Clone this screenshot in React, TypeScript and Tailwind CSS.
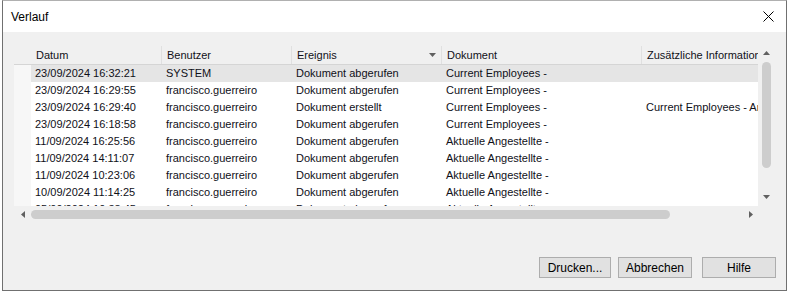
import React from "react";

const rows = [
  ["23/09/2024 16:32:21", "SYSTEM", "Dokument abgerufen", "Current Employees -", ""],
  ["23/09/2024 16:29:55", "francisco.guerreiro", "Dokument abgerufen", "Current Employees -", ""],
  ["23/09/2024 16:29:40", "francisco.guerreiro", "Dokument erstellt", "Current Employees -", "Current Employees - Anmerkungen"],
  ["23/09/2024 16:18:58", "francisco.guerreiro", "Dokument abgerufen", "Current Employees -", ""],
  ["11/09/2024 16:25:56", "francisco.guerreiro", "Dokument abgerufen", "Aktuelle Angestellte -", ""],
  ["11/09/2024 14:11:07", "francisco.guerreiro", "Dokument abgerufen", "Aktuelle Angestellte -", ""],
  ["11/09/2024 10:23:06", "francisco.guerreiro", "Dokument abgerufen", "Aktuelle Angestellte -", ""],
  ["10/09/2024 11:14:25", "francisco.guerreiro", "Dokument abgerufen", "Aktuelle Angestellte -", ""],
  ["05/09/2024 10:38:45", "francisco.guerreiro", "Dokument abgerufen", "Aktuelle Angestellte -", ""],
];

const widths = ["w-[130px]", "w-[130px]", "w-[150px]", "w-[200px]", "w-[160px]"];
const headers = ["Datum", "Benutzer", "Ereignis", "Dokument", "Zusätzliche Informationen"];

function Tri({ dir }: { dir: "up" | "down" | "left" | "right" }) {
  const pts =
    dir === "up" ? "0,4 3.5,0 7,4" : dir === "down" ? "0,0 7,0 3.5,4" : dir === "left" ? "4,0 4,7 0,3.5" : "0,0 0,7 4,3.5";
  const w = dir === "up" || dir === "down" ? 7 : 4;
  const h = dir === "up" || dir === "down" ? 4 : 7;
  return (
    <svg width={w} height={h} viewBox={`0 0 ${w} ${h}`}>
      <polygon points={pts} fill="#606060" />
    </svg>
  );
}

export default function App() {
  return (
    <div className="w-[790px] h-[293px] bg-white pl-[2px]" style={{ fontFamily: '"Liberation Sans", Arial, sans-serif' }}>
      <div className="w-[785px] h-[291px] border border-[#707070] border-t-[#b0b0b0] flex flex-col">
        {/* title bar */}
        <div className="h-[31px] bg-white flex items-center justify-between pl-[8px] pr-[12px] shrink-0">
          <span className="text-[12px] text-black">Verlauf</span>
          <svg width="11" height="11" viewBox="0 0 11 11">
            <path d="M0.5 0.5 L10.5 10.5 M10.5 0.5 L0.5 10.5" stroke="#000" strokeWidth="1" />
          </svg>
        </div>
        {/* body */}
        <div className="flex-1 bg-[#f0f0f0] flex flex-col pt-[13px] pl-[11px] pr-[10px]">
          {/* list */}
          <div className="w-[762px] h-[178px] flex flex-col text-[11px] text-[#101018]">
            <div className="flex h-[161px]">
              {/* data area */}
              <div className="w-[744px] overflow-hidden flex flex-col">
                {/* header */}
                <div className="flex h-[20px] border-b border-[#d5d5d5] shrink-0 bg-[#f0f0f0] pt-[1px]">
                  <div className="w-[17px] shrink-0" />
                  {headers.map((h, i) => (
                    <div
                      key={h}
                      className={`${widths[i]} shrink-0 flex items-center justify-between pl-[5px] pr-[5px] whitespace-nowrap overflow-hidden ${i > 0 ? "border-l border-[#e0e0e0]" : ""}`}
                    >
                      <span>{h}</span>
                      {i === 2 && <Tri dir="down" />}
                    </div>
                  ))}
                </div>
                {/* rows */}
                <div className="flex-1 overflow-hidden flex">
                  <div className="w-[17px] shrink-0 bg-[#f7f7f7]" />
                  <div className="flex-1 bg-white overflow-hidden">
                    {rows.map((r, ri) => (
                      <div key={ri} className={`flex h-[17px] leading-[17px] ${ri === 0 ? "bg-[#e5e5e5]" : ""}`}>
                        {r.map((c, ci) => (
                          <div
                            key={ci}
                            className={`${widths[ci]} shrink-0 ${ci === 0 ? "pl-[4px]" : "pl-[5px]"} whitespace-nowrap overflow-hidden`}
                          >
                            {c}
                          </div>
                        ))}
                      </div>
                    ))}
                  </div>
                </div>
              </div>
              {/* vertical scrollbar */}
              <div className="w-[17px] bg-[#f0f0f0] flex flex-col items-center">
                <div className="h-[14px] flex items-center justify-center pt-[2px]">
                  <Tri dir="up" />
                </div>
                <div className="mt-[3px] w-[9px] h-[106px] rounded-full bg-[#cdcdcd]" />
                <div className="flex-1" />
                <div className="h-[14px] flex items-center justify-center pb-[4px]">
                  <Tri dir="down" />
                </div>
              </div>
            </div>
            {/* horizontal scrollbar */}
            <div className="flex h-[17px] bg-[#f0f0f0] items-center">
              <div className="w-[17px] flex justify-center">
                <Tri dir="left" />
              </div>
              <div className="w-[639px] h-[9px] rounded-full bg-[#cdcdcd]" />
              <div className="flex-1" />
              <div className="w-[17px] flex justify-center mr-[17px]">
                <Tri dir="right" />
              </div>
            </div>
          </div>
          {/* buttons */}
          <div className="flex justify-end mt-[34px] text-[12px]">
            <button className="w-[72px] h-[21px] bg-[#e1e1e1] border border-[#adadad] text-black">Drucken...</button>
            <button className="w-[74px] h-[21px] bg-[#e1e1e1] border border-[#adadad] text-black ml-[7px]">Abbrechen</button>
            <button className="w-[74px] h-[21px] bg-[#e1e1e1] border border-[#adadad] text-black ml-[10px]">Hilfe</button>
          </div>
        </div>
      </div>
    </div>
  );
}
